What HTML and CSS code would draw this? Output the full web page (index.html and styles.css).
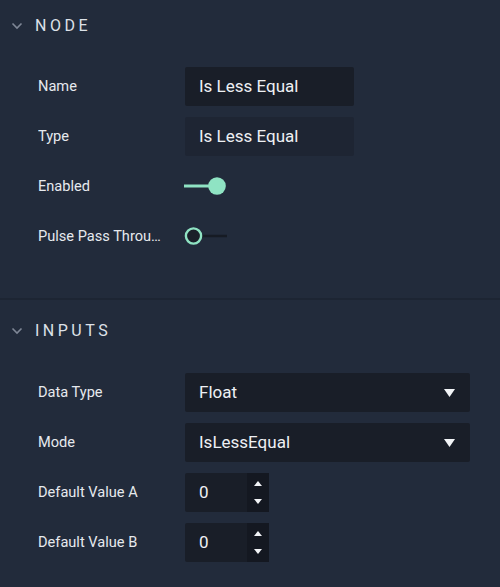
FILE: index.html
```html
<!DOCTYPE html>
<html>
<head>
<meta charset="utf-8">
<link rel="stylesheet" href="styles.css">
</head>
<body>
<div class="panel">
  <section class="section section-node">
    <div class="header">
      <svg class="chev" width="12" height="8" viewBox="0 0 12 8"><path d="M1.5 1.5 L6 6 L10.5 1.5" fill="none" stroke="#7f8796" stroke-width="1.6"/></svg>
      <span class="title">NODE</span>
    </div>
    <div class="rows">
      <div class="row"><span class="label">Name</span><div class="field text">Is Less Equal</div></div>
      <div class="row"><span class="label">Type</span><div class="field text readonly">Is Less Equal</div></div>
      <div class="row"><span class="label">Enabled</span>
        <svg class="toggle" width="44" height="20" viewBox="0 0 44 20"><line x1="0" y1="10" x2="28" y2="10" stroke="#8fe3c3" stroke-width="3"/><circle cx="33" cy="10" r="8.8" fill="#8fe3c3"/></svg>
      </div>
      <div class="row"><span class="label">Pulse Pass Through</span>
        <svg class="toggle" width="44" height="20" viewBox="0 0 44 20"><line x1="18" y1="10" x2="43" y2="10" stroke="#161b24" stroke-width="2.5"/><circle cx="9.5" cy="10" r="7.6" fill="#1a1f29" stroke="#8fe3c3" stroke-width="2.4"/></svg>
      </div>
    </div>
  </section>
  <section class="section section-inputs">
    <div class="header">
      <svg class="chev" width="12" height="8" viewBox="0 0 12 8"><path d="M1.5 1.5 L6 6 L10.5 1.5" fill="none" stroke="#7f8796" stroke-width="1.6"/></svg>
      <span class="title">INPUTS</span>
    </div>
    <div class="rows">
      <div class="row"><span class="label">Data Type</span><div class="field select"><span>Float</span><svg width="11" height="8" viewBox="0 0 11 8"><path d="M0 0 H11 L5.5 8 Z" fill="#f2f4f7"/></svg></div></div>
      <div class="row"><span class="label">Mode</span><div class="field select"><span>IsLessEqual</span><svg width="11" height="8" viewBox="0 0 11 8"><path d="M0 0 H11 L5.5 8 Z" fill="#f2f4f7"/></svg></div></div>
      <div class="row"><span class="label">Default Value A</span>
        <div class="field number"><span class="num">0</span><div class="spin"><svg width="8" height="5" viewBox="0 0 8 5"><path d="M0 5 H8 L4 0 Z" fill="#f2f4f7"/></svg><svg width="8" height="5" viewBox="0 0 8 5"><path d="M0 0 H8 L4 5 Z" fill="#f2f4f7"/></svg></div></div>
      </div>
      <div class="row"><span class="label">Default Value B</span>
        <div class="field number"><span class="num">0</span><div class="spin"><svg width="8" height="5" viewBox="0 0 8 5"><path d="M0 5 H8 L4 0 Z" fill="#f2f4f7"/></svg><svg width="8" height="5" viewBox="0 0 8 5"><path d="M0 0 H8 L4 5 Z" fill="#f2f4f7"/></svg></div></div>
      </div>
    </div>
  </section>
</div>
</body>
</html>
```

FILE: styles.css
```css
html, body {
  margin: 0;
  padding: 0;
  background: #222b3b;
}
body {
  width: 500px;
  height: 587px;
  overflow: hidden;
  font-family: Roboto, "Liberation Sans", sans-serif;
  color: #e8ebf0;
}
.panel {
  display: flex;
  flex-direction: column;
}
.section-node {
  padding-bottom: 42px;
  border-bottom: 2px solid #1d2533;
}
.header {
  display: flex;
  align-items: center;
  height: 50px;
  padding-left: 11px;
}
.section-inputs .header {
  height: 60px;
}
.chev {
  margin-right: 12px;
  margin-top: 1px;
}
.title {
  font-size: 16px;
  font-weight: 400;
  letter-spacing: 3.5px;
  color: #dde1e8;
}
.rows {
  display: flex;
  flex-direction: column;
  gap: 10px;
  padding-top: 16px;
}
.section-inputs .rows {
  padding-top: 12px;
}
.row {
  display: flex;
  align-items: center;
  height: 40px;
  padding-left: 38px;
}
.label {
  width: 124px;
  margin-right: 23px;
  font-size: 14.6px;
  white-space: nowrap;
  overflow: hidden;
  text-overflow: ellipsis;
  color: #e6e9ee;
}
.field {
  height: 39px;
  box-sizing: border-box;
  background: #191e28;
  border-radius: 2px;
  display: flex;
  align-items: center;
  font-size: 17px;
  color: #eef0f4;
}
.text {
  width: 169px;
  padding-left: 14px;
}
.readonly {
  background: #1e2533;
}
.select {
  width: 285px;
  padding: 0 15px 0 14px;
  justify-content: space-between;
}
.select svg {
  margin-top: 1px;
}
.toggle {
  display: block;
  margin-left: -1px;
}
.number {
  width: 84px;
  padding-left: 14px;
  justify-content: space-between;
}
.spin {
  width: 22px;
  height: 39px;
  background: #141821;
  display: flex;
  flex-direction: column;
  align-items: center;
  justify-content: center;
  gap: 13px;
}
```
